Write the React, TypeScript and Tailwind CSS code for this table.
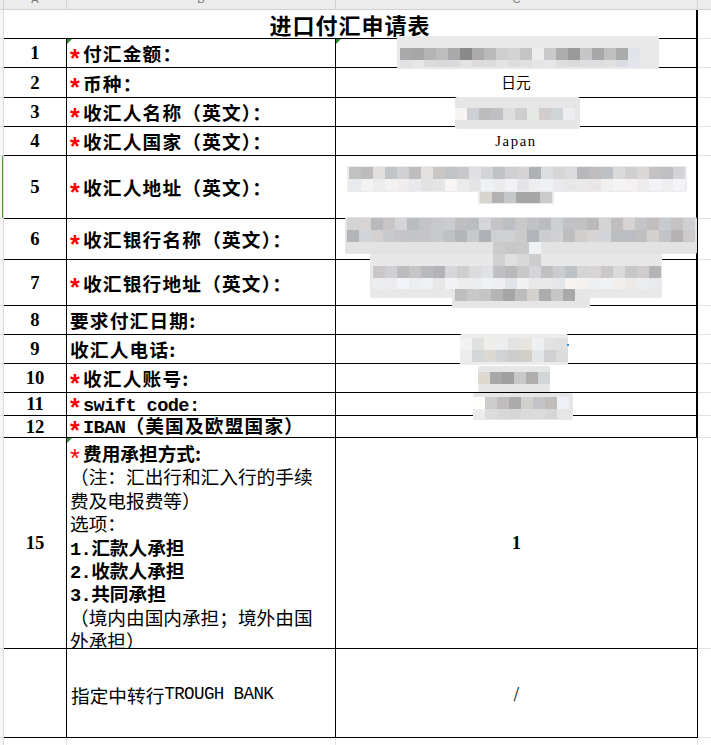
import type { ReactNode } from "react";

const CJK = '"Noto Sans CJK SC", sans-serif';
const SERIF = '"Liberation Serif", "Noto Sans CJK SC", serif';
const MONO = '"Liberation Mono", monospace';

// deterministic grey tiles for the blurred cells
function shades(n: number, seed: number, lo: number, hi: number) {
  const out: string[] = [];
  let s = seed;
  for (let i = 0; i < n; i++) {
    s = (s * 9301 + 49297) % 233280;
    const v = Math.round(lo + (s / 233280) * (hi - lo));
    const t = (s % 7) - 3;
    const r = Math.min(255, v + t);
    const b = Math.min(255, v - t + 2);
    out.push(`rgb(${r},${v},${b})`);
  }
  return out;
}

type Blob = { x: number; y: number; w: number; h: number; c: string };
type Tiles = { x: number; y: number; th: number; colors: string[] };

const blobs: Blob[] = [
  { x: 397, y: 36, w: 262, h: 33, c: "#e9e9e9" },
  { x: 455, y: 97, w: 125, h: 32, c: "#e6e6e6" },
  { x: 347, y: 166, w: 340, h: 26, c: "#ececec" },
  { x: 478, y: 190, w: 76, h: 14, c: "#e9e9e9" },
  { x: 345, y: 217, w: 352, h: 37, c: "#e3e3e3" },
  { x: 370, y: 254, w: 292, h: 44, c: "#e8e8e8" },
  { x: 452, y: 288, w: 138, h: 20, c: "#e6e6e6" },
  { x: 460, y: 334, w: 108, h: 31, c: "#ececec" },
  { x: 478, y: 366, w: 72, h: 26, c: "#e6e6e6" },
  { x: 473, y: 393, w: 100, h: 27, c: "#e6e6e6" },
];

const tiles: Tiles[] = [
  {
    x: 400, y: 48, th: 12,
    colors: ["#aaa", "#a6a6a6", "#b4b4b4", "#bdbdbd", "#a9a9a9", "#8a8a8a", "#ababab", "#bababa", "#cecece", "#d3d3d3", "#c5c5c5", "#ededed", "#cacaca", "#adadad", "#9a9a9a", "#c6c6c6", "#a8a8a8", "#bfbfbf", "#ababab", "#e1e5e9"],
  },
  { x: 400, y: 60, th: 7, colors: shades(20, 11, 214, 232) },
  { x: 455, y: 108, th: 12, colors: ["#f7f5f3", "#ccd0d4", "#bcbcbc", "#c0c0c4", "#dedede", "#cecece", "#e5e8e5", "#d2cccc", "#d0d5d8", "#eceef2"] },
  { x: 349, y: 167, th: 12, colors: shades(28, 3, 176, 226) },
  { x: 349, y: 179, th: 12, colors: shades(28, 5, 226, 245) },
  { x: 480, y: 192, th: 11, colors: ["#d8d4d0", "#b2b2b2", "#c6c9c9", "#a6a6a6", "#a6a6a6", "#cbcbcb"] },
  { x: 347, y: 218, th: 12, colors: shades(29, 17, 184, 216) },
  { x: 347, y: 230, th: 12, colors: shades(29, 23, 176, 214) },
  { x: 493, y: 242, th: 12, colors: ["#cbcbcb", "#c8c8c8", "#cacaca", "#eff2f4"] },
  { x: 493, y: 254, th: 12, colors: ["#d0d0d0", "#e0e0e0", "#d8d8d8", "#cdcdcd"] },
  { x: 373, y: 266, th: 12, colors: shades(24, 31, 178, 226) },
  { x: 373, y: 278, th: 11, colors: shades(24, 37, 222, 244) },
  { x: 455, y: 289, th: 12, colors: ["#bdbdbd", "#c8c8c8", "#c4c4c4", "#b4b4b4", "#a5a5a5", "#bcbcbc", "#d4d0cc", "#acacac", "#c6c6c6", "#a9a9a9"] },
  { x: 460, y: 338, th: 12, colors: ["#f2f2f2", "#e0e2e0", "#f0eeea", "#eceef0", "#e2e4e2", "#e8e4e0", "#eef0f2", "#e2e2e2", "#e0e0e0"] },
  { x: 460, y: 350, th: 12, colors: ["#ececec", "#d4d6d8", "#dcd8d4", "#d0d2d4", "#cdcdcd", "#d2ceca", "#e4e6e8", "#d0d0d2", "#dcdcdc"] },
  { x: 478, y: 372, th: 12, colors: ["#ddd8d0", "#a8a8a8", "#a0a0a0", "#c8c8c8", "#b0aeac", "#d0d5d8"] },
  { x: 473, y: 397, th: 12, colors: ["#fdfdf9", "#cccccc", "#c0bcbc", "#ababab", "#d0d0cc", "#c4c4c8", "#c0bcb8", "#eef2f6"] },
  { x: 473, y: 409, th: 10, colors: ["#ececec", "#dcdcdc", "#d8d8d8", "#d6d6d6", "#dadada", "#dcdcdc", "#d6d6d6", "#e6e6e6"] },
];

function Star({ thin }: { thin?: boolean }) {
  return (
    <span
      className={`inline-block w-[13px] h-[14px] overflow-visible align-middle text-[#ff0000] text-[25px] leading-none tracking-normal ${thin ? "font-normal" : "font-bold"}`}
      style={{ fontFamily: '"Liberation Sans", sans-serif' }}
    >
      <span className="block -translate-y-[3px]">*</span>
    </span>
  );
}

function Mono({ children }: { children: ReactNode }) {
  return <span className="tracking-[-0.6px]" style={{ fontFamily: MONO }}>{children}</span>;
}

type Row = { n: string; h: string; label: ReactNode; value?: ReactNode; flag?: boolean; sel?: boolean };

const rows: Row[] = [
  { n: "1", h: "h-[29px]", label: <><Star />付汇金额：</>, flag: true },
  { n: "2", h: "h-[30px]", label: <><Star />币种：</>, value: <span className="text-[14.7px]">日元</span> },
  { n: "3", h: "h-[29px]", label: <><Star />收汇人名称（英文）：</> },
  { n: "4", h: "h-[29px]", label: <><Star />收汇人国家（英文）：</>, value: <span className="text-[14.7px] tracking-[1.6px]" style={{ fontFamily: SERIF }}>Japan</span> },
  { n: "5", h: "h-[63px]", label: <><Star />收汇人地址（英文）：</>, sel: true },
  { n: "6", h: "h-[41px]", label: <><Star />收汇银行名称（英文）：</> },
  { n: "7", h: "h-[46px]", label: <><Star />收汇银行地址（英文）：</> },
  { n: "8", h: "h-[29px]", label: <>要求付汇日期:</> },
  { n: "9", h: "h-[29px]", label: <>收汇人电话:</> },
  { n: "10", h: "h-[29px]", label: <><Star />收汇人账号:</> },
  { n: "11", h: "h-[23px]", label: <><Star /><Mono>swift code:</Mono></> },
  { n: "12", h: "h-[22px]", label: <><Star /><Mono>IBAN</Mono>（美国及欧盟国家）</> },
];

function Strip({ sel }: { sel?: boolean }) {
  return (
    <div className="w-[4px] shrink-0 border-r border-b border-[#dcdcdc] bg-[#f6f6f6]">
      {sel && <div className="ml-[2px] w-[1px] h-full bg-[#4f9a3b]" />}
    </div>
  );
}

function Flag() {
  return (
    <div className="absolute left-0 top-0 w-0 h-0 border-t-[5px] border-r-[5px] border-t-[#2e8b2e] border-r-transparent" />
  );
}

function Line({ bold, children }: { bold?: boolean; children: ReactNode }) {
  return (
    <div className={`h-[23.4px] leading-[23.4px] overflow-visible ${bold ? "font-bold" : ""}`}>{children}</div>
  );
}

export default function App() {
  return (
    <div className="relative w-[711px] h-[745px] overflow-hidden bg-white text-black" style={{ fontFamily: CJK }}>
      {/* column header */}
      <div className="flex h-[10px] bg-[#ececec] border-b border-[#d2d2d2] text-[11px] leading-none text-[#777]" style={{ fontFamily: '"Liberation Sans", sans-serif' }}>
        <div className="w-[4px] shrink-0 border-r border-[#d2d2d2]" />
        <div className="w-[63px] shrink-0 border-r border-[#d2d2d2] text-center -mt-[6px]">A</div>
        <div className="w-[269px] shrink-0 border-r border-[#d2d2d2] text-center -mt-[6px]">B</div>
        <div className="w-[362px] shrink-0 border-r border-[#d2d2d2] text-center -mt-[6px]">C</div>
        <div className="flex-1" />
      </div>

      {/* title */}
      <div className="flex h-[29px]">
        <Strip />
        <div className="w-[694px] shrink-0 border-r-2 border-b border-black flex items-center justify-center text-[22px] font-bold tracking-[1px]">
          进口付汇申请表
        </div>
        <div className="flex-1 border-b border-[#e2e2e2]" />
      </div>

      {rows.map((r) => (
        <div key={r.n} className={`flex ${r.h}`}>
          <Strip sel={r.sel} />
          <div className="w-[63px] shrink-0 border-r border-b border-black flex items-center justify-center text-[18.67px] font-bold" style={{ fontFamily: SERIF }}>
            {r.n}
          </div>
          <div className="relative w-[269px] shrink-0 border-r border-b border-black flex items-center pl-[3px] text-[18.67px] font-bold tracking-[1.2px] whitespace-nowrap overflow-hidden">
            {r.flag && <Flag />}
            <span>{r.label}</span>
          </div>
          <div className="relative w-[362px] shrink-0 border-r-2 border-b border-black flex items-center justify-center">
            {r.flag && <Flag />}
            {r.value}
          </div>
          <div className="flex-1 border-b border-[#e2e2e2]" />
        </div>
      ))}

      {/* row 15 */}
      <div className="flex h-[211px]">
        <Strip />
        <div className="w-[63px] shrink-0 border-r border-b border-black flex items-center justify-center text-[18.67px] font-bold" style={{ fontFamily: SERIF }}>
          15
        </div>
        <div className="relative w-[269px] shrink-0 border-r border-b border-black pl-[3px] pt-[3px] text-[18.67px] whitespace-nowrap overflow-hidden">
          <Flag />
          <Line bold><Star thin />费用承担方式:</Line>
          <Line>（注：汇出行和汇入行的手续</Line>
          <Line>费及电报费等）</Line>
          <Line>选项：</Line>
          <Line bold><Mono>1.</Mono>汇款人承担</Line>
          <Line bold><Mono>2.</Mono>收款人承担</Line>
          <Line bold><Mono>3.</Mono>共同承担</Line>
          <Line>（境内由国内承担；境外由国</Line>
          <Line>外承担）</Line>
        </div>
        <div className="w-[362px] shrink-0 border-r border-b border-black flex items-center justify-center text-[18.67px] font-bold" style={{ fontFamily: SERIF }}>
          1
        </div>
        <div className="flex-1 border-b border-[#e2e2e2]" />
      </div>

      {/* intermediary bank */}
      <div className="flex h-[89px]">
        <Strip />
        <div className="w-[63px] shrink-0 border-r border-b border-black" />
        <div className="w-[269px] shrink-0 border-r border-b border-black flex items-center pl-[4px] pt-[3px] text-[18.67px] whitespace-nowrap">
          指定中转行<span className="text-[17.5px] tracking-[-0.6px]" style={{ fontFamily: MONO }}>TROUGH BANK</span>
        </div>
        <div className="w-[362px] shrink-0 border-r border-b border-black flex items-center justify-center text-[14.7px]">
          /
        </div>
        <div className="flex-1 border-b border-[#e2e2e2]" />
      </div>

      {/* empty grid row */}
      <div className="flex h-[20px]">
        <div className="w-[4px] shrink-0 border-r border-[#dcdcdc] bg-[#f6f6f6]" />
        <div className="w-[63px] shrink-0 border-r border-[#e2e2e2]" />
        <div className="w-[269px] shrink-0 border-r border-[#e2e2e2]" />
        <div className="w-[362px] shrink-0 border-r border-[#e2e2e2]" />
        <div className="flex-1" />
      </div>

      {/* redacted values */}
      <div className="absolute inset-0 pointer-events-none">
        {blobs.map((b, i) => (
          <div key={`b${i}`} className="absolute rounded-[2px]" style={{ left: b.x, top: b.y, width: b.w, height: b.h, background: b.c }} />
        ))}
        {tiles.map((t, i) =>
          t.colors.map((c, j) => (
            <div key={`t${i}-${j}`} className="absolute" style={{ left: t.x + j * 12, top: t.y, width: 12, height: t.th, background: c }} />
          ))
        )}
        <div className="absolute left-[567px] top-[344px] w-[2px] h-[2px] bg-[#3a8fe0]" />
      </div>
    </div>
  );
}
